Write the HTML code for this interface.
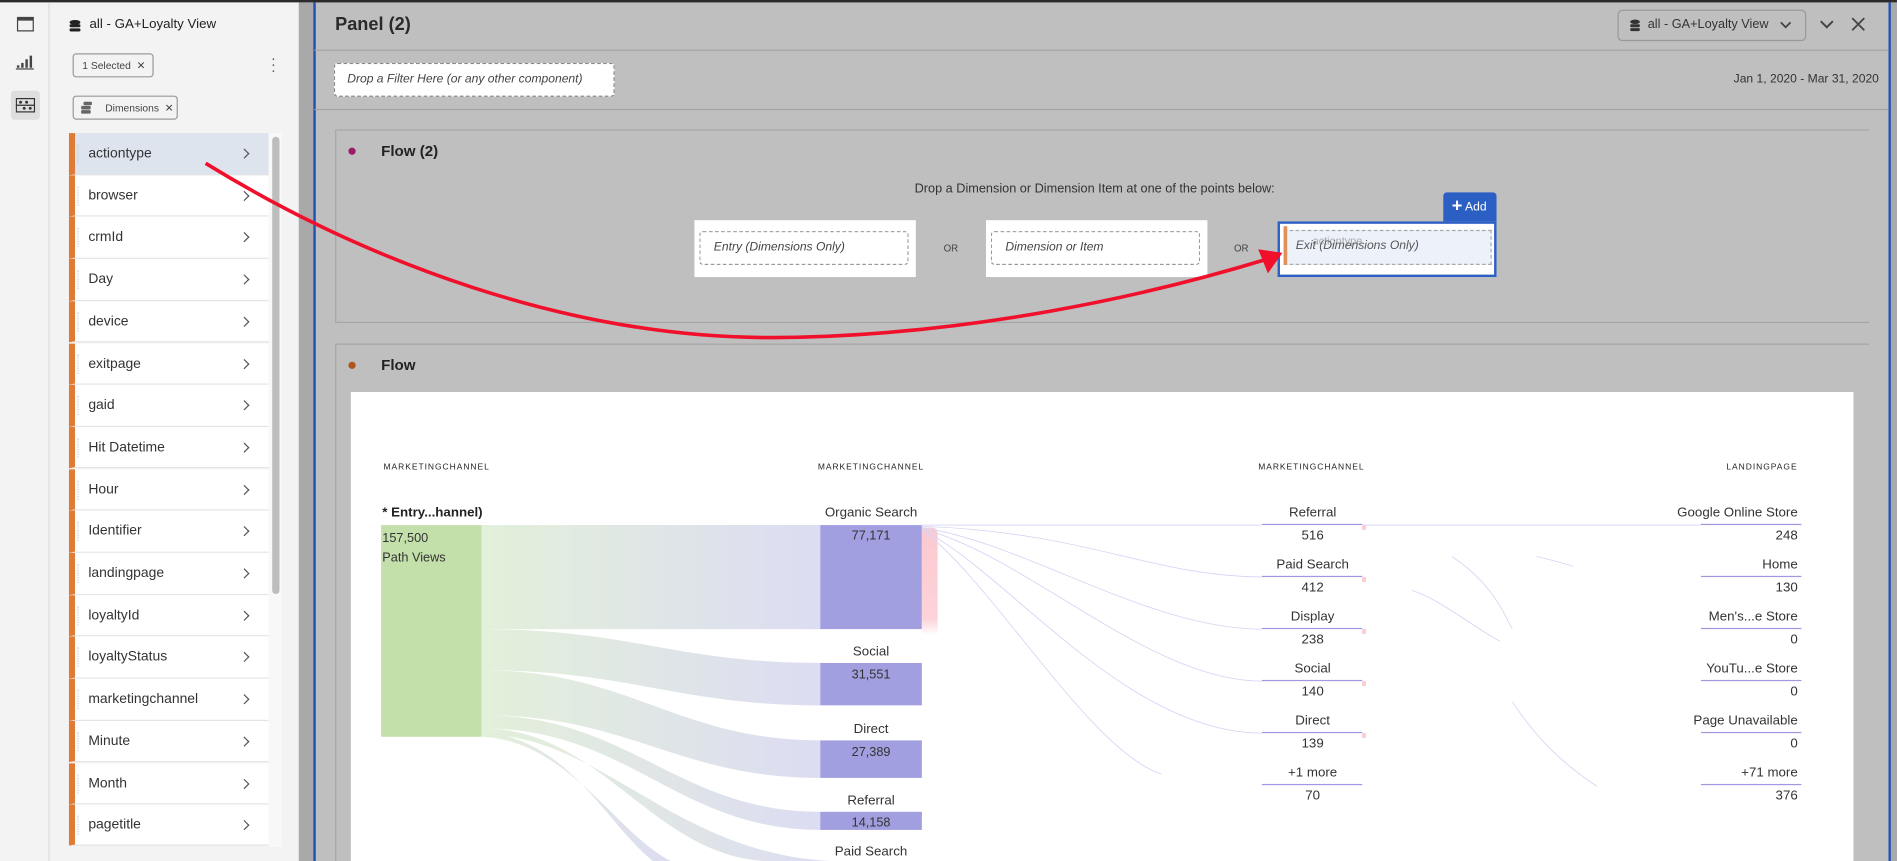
<!DOCTYPE html>
<html><head><meta charset="utf-8"><style>
*{box-sizing:border-box;margin:0;padding:0}
html,body{width:1897px;height:861px;overflow:hidden;background:#bfbfbf;font-family:"Liberation Sans",sans-serif;color:#2c2c2c}
#w{position:absolute;left:0;top:0;width:1568px;height:712px;transform:scale(1.2098);transform-origin:0 0;overflow:hidden;background:#bfbfbf}
.a{position:absolute}
.t{position:absolute;white-space:nowrap}
.item{position:absolute;left:57px;width:165px;height:34.6px;background:#fff;border-left:5px solid #e07b35;border-bottom:1px solid #e4e4e4;font-size:11.5px;line-height:34px;padding-left:11px;color:#333}
.item:before{content:"";position:absolute;left:2px;top:9px;height:16px;border-left:1px dotted #ccc}
.item:after{content:"";position:absolute;right:17px;top:14px;width:5px;height:5px;border-right:1.5px solid #555;border-top:1.5px solid #555;transform:rotate(45deg)}
.lbl{position:absolute;font-size:7px;letter-spacing:.8px;color:#222}
.n{position:absolute;font-size:11px;text-align:center;color:#333}
</style></head><body><div id="w">
<div class="a" style="left:0;top:0;width:1568px;height:2px;background:#2b2b2b"></div>
<div class="a" style="left:0;top:2px;width:41px;height:710px;background:#f3f3f3;border-right:1px solid #dcdcdc"></div>
<div class="a" style="left:14px;top:14px;width:14px;height:12px;border:1.5px solid #444;border-top-width:3px"></div>
<svg class="a" style="left:13px;top:44px" width="16" height="14"><rect x="1" y="10" width="2" height="2" fill="#444"/><rect x="4.5" y="8" width="2" height="4" fill="#444"/><rect x="8" y="5" width="2" height="7" fill="#444"/><rect x="11.5" y="2" width="2" height="10" fill="#444"/><rect x="0" y="12.5" width="15" height="1" fill="#444"/></svg>
<div class="a" style="left:9px;top:75px;width:24px;height:24px;background:#dedede;border-radius:3px"></div>
<svg class="a" style="left:13px;top:81px" width="16" height="12"><rect x="0.5" y="0.5" width="15" height="11" fill="none" stroke="#333"/><line x1="0" y1="6" x2="16" y2="6" stroke="#333"/><circle cx="4" cy="3.5" r="1.2" fill="#333"/><circle cx="9" cy="3.5" r="1.2" fill="#333"/><circle cx="7" cy="8.5" r="1.2" fill="#333"/><circle cx="12" cy="8.5" r="1.2" fill="#333"/></svg>
<div class="a" style="left:41px;top:2px;width:206px;height:710px;background:#f3f3f3"></div>
<svg class="a" style="left:57px;top:16px" width="10" height="11"><ellipse cx="5" cy="2.5" rx="4.5" ry="2" fill="#222"/><rect x="0.5" y="4" width="9" height="2.5" rx="1" fill="#222"/><rect x="0.5" y="7.5" width="9" height="2.5" rx="1" fill="#222"/></svg>
<div class="t" style="left:74px;top:14px;font-size:11px;color:#222">all - GA+Loyalty View</div>
<div class="a" style="left:60px;top:44px;width:67px;height:20px;border:1px solid #999;border-radius:3px;font-size:8.5px;line-height:18px;padding-left:7px;color:#444">1 Selected&nbsp;&nbsp;✕</div>
<div class="t" style="left:224px;top:46px;font-size:12px;line-height:5px;color:#555">·<br>·<br>·</div>
<div class="a" style="left:60px;top:79px;width:87px;height:20px;border:1px solid #999;border-radius:3px;font-size:8.5px;line-height:18px;padding-left:26px;color:#444">Dimensions&nbsp;&nbsp;✕</div>
<svg class="a" style="left:67px;top:84px" width="10" height="10"><rect x="2" y="0" width="7" height="3" rx="1" fill="#666"/><rect x="0" y="3.5" width="8" height="3" rx="1" fill="#666"/><rect x="0" y="7" width="8" height="3" rx="1" fill="#666"/></svg>
<div class="a" style="left:222px;top:110px;width:11px;height:590px;background:#f8f8f8"></div>
<div class="a" style="left:225px;top:113px;width:6px;height:378px;background:#bdbdbd;border-radius:3px"></div>
<div class="item" style="top:110px;background:#dde4ee">actiontype</div>
<div class="item" style="top:144.7px">browser</div>
<div class="item" style="top:179.4px">crmId</div>
<div class="item" style="top:214.1px">Day</div>
<div class="item" style="top:248.8px">device</div>
<div class="item" style="top:283.5px">exitpage</div>
<div class="item" style="top:318.2px">gaid</div>
<div class="item" style="top:352.9px">Hit Datetime</div>
<div class="item" style="top:387.6px">Hour</div>
<div class="item" style="top:422.3px">Identifier</div>
<div class="item" style="top:457px">landingpage</div>
<div class="item" style="top:491.7px">loyaltyId</div>
<div class="item" style="top:526.4px">loyaltyStatus</div>
<div class="item" style="top:561.1px">marketingchannel</div>
<div class="item" style="top:595.8px">Minute</div>
<div class="item" style="top:630.5px">Month</div>
<div class="item" style="top:665.2px;height:34px">pagetitle</div>
<div class="a" style="left:247px;top:2px;width:12px;height:710px;background:#a9a9a9"></div>
<div class="a" style="left:259px;top:2px;width:1.5px;height:710px;background:#2050b8"></div>
<div class="a" style="left:1561px;top:2px;width:1.5px;height:710px;background:#2050b8"></div>
<div class="a" style="left:1562.5px;top:2px;width:6px;height:710px;background:#a9a9a9"></div>
<div class="t" style="left:277px;top:12px;font-size:15px;font-weight:bold;color:#2a2a2a">Panel (2)</div>
<div class="a" style="left:1337px;top:8px;width:156px;height:26px;border:1px solid #999;border-radius:4px"></div>
<svg class="a" style="left:1347px;top:16px" width="9" height="10"><ellipse cx="4.5" cy="2" rx="4" ry="1.8" fill="#333"/><rect x="0.5" y="4" width="8" height="2.5" rx="1" fill="#333"/><rect x="0.5" y="7.2" width="8" height="2.5" rx="1" fill="#333"/></svg>
<div class="t" style="left:1362px;top:14px;font-size:10.5px;color:#333">all - GA+Loyalty View</div>
<svg class="a" style="left:1471px;top:17px" width="10" height="7"><path d="M1 1.5L5 5.5L9 1.5" fill="none" stroke="#444" stroke-width="1.5"/></svg>
<svg class="a" style="left:1504px;top:16px" width="12" height="8"><path d="M1 1.5L6 6.5L11 1.5" fill="none" stroke="#444" stroke-width="1.6"/></svg>
<svg class="a" style="left:1530px;top:14px" width="12" height="12"><path d="M1 1L11 11M11 1L1 11" stroke="#444" stroke-width="1.5"/></svg>
<div class="a" style="left:260px;top:41px;width:1301px;height:1px;background:#a3a3a3"></div>
<div class="a" style="left:276px;top:52px;width:232px;height:28px;background:#fff;border:1px dashed #888;border-radius:3px;font-size:10px;font-style:italic;line-height:26px;padding-left:10px;color:#444">Drop a Filter Here (or any other component)</div>
<div class="t" style="left:1433px;top:60px;font-size:10px;color:#333">Jan 1, 2020 - Mar 31, 2020</div>
<div class="a" style="left:260px;top:90px;width:1301px;height:1px;background:#a3a3a3"></div>
<div class="a" style="left:277px;top:107px;width:1268px;height:160px;border:1px solid #a6a6a6;border-width:1px 0 1px 1px"></div>
<div class="a" style="left:288px;top:122px;width:6px;height:6px;border-radius:50%;background:#9d1c6a"></div>
<div class="t" style="left:315px;top:118px;font-size:12.5px;font-weight:bold;color:#222">Flow (2)</div>
<div class="t" style="left:756px;top:150px;font-size:10.5px;color:#333">Drop a Dimension or Dimension Item at one of the points below:</div>
<div class="a" style="left:574px;top:182px;width:183px;height:47px;background:#fff"></div>
<div class="a" style="left:578px;top:191px;width:173px;height:28px;border:1px dashed #999;border-radius:3px;font-size:10px;font-style:italic;line-height:26px;padding-left:11px;color:#444">Entry (Dimensions Only)</div>
<div class="t" style="left:780px;top:201px;font-size:8px;color:#444">OR</div>
<div class="a" style="left:815px;top:182px;width:183px;height:47px;background:#fff"></div>
<div class="a" style="left:819px;top:191px;width:173px;height:28px;border:1px dashed #999;border-radius:3px;font-size:10px;font-style:italic;line-height:26px;padding-left:11px;color:#444">Dimension or Item</div>
<div class="t" style="left:1020px;top:201px;font-size:8px;color:#444">OR</div>
<div class="a" style="left:1193px;top:159px;width:44px;height:25px;background:#2c5fc3;border-radius:3px 3px 0 0;color:#fff;font-size:10px;line-height:24px;padding-left:7px"><b style="font-size:15px;vertical-align:-1px">+</b> Add</div>
<div class="a" style="left:1056px;top:183px;width:181px;height:46px;background:#fff;border:2.5px solid #2c5fc3"></div>
<div class="a" style="left:1061px;top:190px;width:172px;height:29px;border:1px dashed #aaa;background:#edf2fa"></div>
<div class="a" style="left:1061px;top:187px;width:3px;height:32px;background:#e0915a"></div>
<div class="t" style="left:1071px;top:198px;font-size:10px;font-style:italic;color:#555">Exit (Dimensions Only)</div>
<div class="t" style="left:1085px;top:194px;font-size:9px;color:#777;opacity:.6">actiontype</div>
<div class="a" style="left:277px;top:284px;width:1268px;height:440px;border:1px solid #a6a6a6;border-width:1px 0 0 1px"></div>
<div class="a" style="left:288px;top:299px;width:6px;height:6px;border-radius:50%;background:#b0551c"></div>
<div class="t" style="left:315px;top:295px;font-size:12.5px;font-weight:bold;color:#222">Flow</div>
<div class="a" style="left:290px;top:324px;width:1242px;height:400px;background:#fff"></div>
<svg class="a" style="left:290px;top:324px" width="1242" height="400">
<defs><linearGradient id="g" x1="0" x2="1"><stop offset="0" stop-color="#e3f0da"/><stop offset="1" stop-color="#dcdcf2"/></linearGradient>
<linearGradient id="p" x1="0" x2="0" y1="0" y2="1"><stop offset="0" stop-color="#fcc9d0"/><stop offset=".85" stop-color="#fcd3d9"/><stop offset="1" stop-color="#fff"/></linearGradient></defs>
<g transform="translate(-290,-324)">
<path d="M398 434H678V520H398Z" fill="url(#g)"/>
<path d="M398 520C520 520 560 548 678 548V583C560 583 520 554 398 554Z" fill="url(#g)"/>
<path d="M398 554C520 554 560 612 678 612V643C560 643 520 591 398 591Z" fill="url(#g)"/>
<path d="M398 591C520 591 560 671 678 671V686C560 686 520 602 398 602Z" fill="url(#g)"/>
<path d="M398 602C500 602 540 712 640 712H700C560 712 500 607 398 607Z" fill="url(#g)"/>
<path d="M398 605C470 610 500 680 540 712H555C510 690 470 612 398 609Z" fill="url(#g)"/>
<rect x="315" y="434" width="83" height="175" fill="#c3e0ab"/>
<rect x="678" y="434" width="84" height="86" fill="#a29fe0"/>
<rect x="678" y="548" width="84" height="35" fill="#a29fe0"/>
<rect x="678" y="612" width="84" height="31" fill="#a29fe0"/>
<rect x="678" y="671" width="84" height="15" fill="#a29fe0"/>
<path d="M762 436H770Q775 436 775 442V525H762Z" fill="url(#p)"/>
<g fill="none" stroke="#d6d4f4" stroke-width="0.7">
<path d="M762 434C900 434 950 434 1043 434"/>
<path d="M762 435C900 440 950 476 1043 477"/>
<path d="M762 436C850 450 950 520 1043 520"/>
<path d="M762 437C850 460 950 563 1043 563"/>
<path d="M762 438C830 470 930 606 1043 606"/>
<path d="M762 438C820 480 900 620 960 640"/>
<path d="M1126 434C1250 434 1300 434 1406 434"/>
<path d="M1200 460C1230 480 1240 500 1250 520"/>
<path d="M1270 460C1280 462 1290 465 1300 468"/>
<path d="M1167 488C1190 495 1220 520 1240 530"/>
<path d="M1250 580C1270 610 1290 630 1320 650"/>
</g>
<g fill="#fcc9d0"><rect x="1126" y="434" width="3" height="4"/><rect x="1126" y="477" width="3" height="4"/><rect x="1126" y="520" width="3" height="4"/><rect x="1126" y="563" width="3" height="4"/><rect x="1126" y="606" width="3" height="4"/></g>
<g fill="#9d98e0"><rect x="1043" y="433" width="83" height="1"/><rect x="1043" y="476" width="83" height="1"/><rect x="1043" y="519" width="83" height="1"/><rect x="1043" y="562" width="83" height="1"/><rect x="1043" y="605" width="83" height="1"/><rect x="1043" y="648" width="83" height="1"/>
<rect x="1406" y="433" width="83" height="1"/><rect x="1406" y="476" width="83" height="1"/><rect x="1406" y="519" width="83" height="1"/><rect x="1406" y="562" width="83" height="1"/><rect x="1406" y="605" width="83" height="1"/><rect x="1406" y="648" width="83" height="1"/></g>
</g></svg>
<div class="lbl" style="left:317px;top:383px">MARKETINGCHANNEL</div>
<div class="lbl" style="left:676px;top:383px">MARKETINGCHANNEL</div>
<div class="lbl" style="left:1040px;top:383px">MARKETINGCHANNEL</div>
<div class="lbl" style="left:1427px;top:383px">LANDINGPAGE</div>
<div class="t" style="left:316px;top:418px;font-size:11px;font-weight:bold;color:#222">* Entry...hannel)</div>
<div class="t" style="left:316px;top:437px;font-size:10.5px;line-height:16px;color:#333">157,500<br>Path Views</div>
<div class="n" style="left:660px;width:120px;top:418px">Organic Search</div>
<div class="n" style="left:660px;width:120px;top:437px;font-size:10.5px">77,171</div>
<div class="n" style="left:660px;width:120px;top:533px">Social</div>
<div class="n" style="left:660px;width:120px;top:552px;font-size:10.5px">31,551</div>
<div class="n" style="left:660px;width:120px;top:597px">Direct</div>
<div class="n" style="left:660px;width:120px;top:616px;font-size:10.5px">27,389</div>
<div class="n" style="left:660px;width:120px;top:656px">Referral</div>
<div class="n" style="left:660px;width:120px;top:674px;font-size:10.5px">14,158</div>
<div class="n" style="left:660px;width:120px;top:698px">Paid Search</div>
<div class="n" style="left:1025px;width:120px;top:418px">Referral</div><div class="n" style="left:1025px;width:120px;top:437px">516</div>
<div class="n" style="left:1025px;width:120px;top:461px">Paid Search</div><div class="n" style="left:1025px;width:120px;top:480px">412</div>
<div class="n" style="left:1025px;width:120px;top:504px">Display</div><div class="n" style="left:1025px;width:120px;top:523px">238</div>
<div class="n" style="left:1025px;width:120px;top:547px">Social</div><div class="n" style="left:1025px;width:120px;top:566px">140</div>
<div class="n" style="left:1025px;width:120px;top:590px">Direct</div><div class="n" style="left:1025px;width:120px;top:609px">139</div>
<div class="n" style="left:1025px;width:120px;top:633px">+1 more</div><div class="n" style="left:1025px;width:120px;top:652px">70</div>
<div class="n" style="left:1336px;width:150px;text-align:right;top:418px">Google Online Store</div><div class="n" style="left:1336px;width:150px;text-align:right;top:437px">248</div>
<div class="n" style="left:1336px;width:150px;text-align:right;top:461px">Home</div><div class="n" style="left:1336px;width:150px;text-align:right;top:480px">130</div>
<div class="n" style="left:1336px;width:150px;text-align:right;top:504px">Men's...e Store</div><div class="n" style="left:1336px;width:150px;text-align:right;top:523px">0</div>
<div class="n" style="left:1336px;width:150px;text-align:right;top:547px">YouTu...e Store</div><div class="n" style="left:1336px;width:150px;text-align:right;top:566px">0</div>
<div class="n" style="left:1336px;width:150px;text-align:right;top:590px">Page Unavailable</div><div class="n" style="left:1336px;width:150px;text-align:right;top:609px">0</div>
<div class="n" style="left:1336px;width:150px;text-align:right;top:633px">+71 more</div><div class="n" style="left:1336px;width:150px;text-align:right;top:652px">376</div>
<svg class="a" style="left:0;top:0" width="1568" height="712">
<path d="M170 135C300 215 470 280 640 279C800 278 950 244 1048 214" fill="none" stroke="#f0102c" stroke-width="3"/>
<path d="M1060 209L1040 206L1048 226Z" fill="#f0102c"/>
</svg>
</div></body></html>
